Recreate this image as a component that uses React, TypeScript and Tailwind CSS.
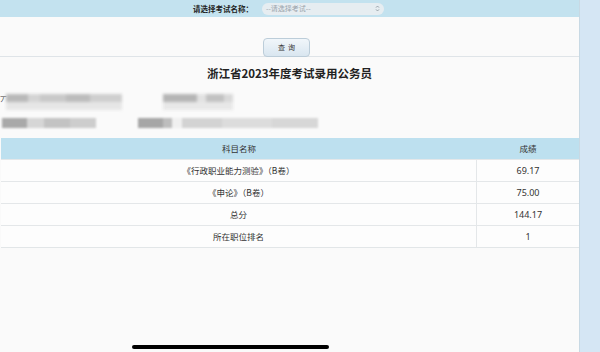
import React from 'react';

const rows = [
  { name: '《行政职业能力测验》（B卷）', score: '69.17' },
  { name: '《申论》（B卷）', score: '75.00' },
  { name: '总分', score: '144.17' },
  { name: '所在职位排名', score: '1' },
];

const font = { fontFamily: '"Noto Sans CJK SC", "Noto Sans", sans-serif' };

const App = () => {
  return (
    <div className="relative flex h-[352px] w-[600px] overflow-hidden bg-[#d5e6f4]" style={font}>
      <div className="flex h-full w-[580px] flex-col border-r border-[#c8d9e4] bg-[#fafafa]">
        {/* Exam picker bar */}
        <div className="flex h-[17px] items-center bg-[#c3e2ef] pl-[193px]">
          <span className="text-[7.5px] font-bold text-[#222]">请选择考试名称：</span>
          <div className="ml-[9px] flex h-[12px] w-[122px] items-center justify-between rounded-full bg-[#e6edf1] pl-[4px] pr-[4px]">
            <span className="text-[7px] text-[#9aa3ab]">--请选择考试--</span>
            <svg width="5" height="7" viewBox="0 0 5 7" className="text-[#8a949c]">
              <path d="M1 2.6 L2.5 1 L4 2.6 M1 4.4 L2.5 6 L4 4.4" fill="none" stroke="currentColor" strokeWidth="0.8" />
            </svg>
          </div>
        </div>

        {/* Query button */}
        <div className="flex border-b border-[#dfe4e8] pl-[263px] pt-[21px]">
          <div className="mb-[-1px] flex h-[19px] w-[47px] items-center justify-center rounded-[4px] border border-[#bccdd9] bg-gradient-to-b from-[#f1f6fa] to-[#d9e6f0] pl-[3px] text-[7px] tracking-[3px] text-[#333]">
            查询
          </div>
        </div>

        {/* Title */}
        <div className="pt-[9px] text-center text-[11.5px] font-semibold leading-[15px] text-[#222]">
          浙江省2023年度考试录用公务员
        </div>

        {/* Blurred personal info */}
        <div className="mt-[13px] flex h-[16px] items-start">
          <span className="w-[6px] text-[7px] leading-[10px] text-[#333]">丆</span>
          <div className="flex h-[16px] w-[116px] flex-col blur-[1.5px]">
            <div className="flex h-[8px]">
              <div className="w-[22px] bg-[#b9b9b9]" />
              <div className="w-[12px] bg-[#d4d4d4]" />
              <div className="w-[26px] bg-[#c9c9c9]" />
              <div className="w-[24px] bg-[#bcbcbc]" />
              <div className="w-[32px] bg-[#cfcfcf]" />
            </div>
            <div className="h-[8px] bg-[#e6e6e6]" />
          </div>
          <div className="ml-[41px] flex h-[16px] w-[70px] flex-col blur-[1.5px]">
            <div className="flex h-[8px]">
              <div className="w-[34px] bg-[#b5b5b5]" />
              <div className="w-[9px] bg-[#e2e2e2]" />
              <div className="w-[18px] bg-[#c2c2c2]" />
              <div className="w-[9px] bg-[#d9d9d9]" />
            </div>
            <div className="h-[8px] bg-[#e8e8e8]" />
          </div>
        </div>

        <div className="mt-[8px] flex h-[10px] items-start pl-[2px]">
          <div className="flex h-[10px] w-[94px] blur-[1.2px]">
            <div className="w-[25px] bg-[#a9a9a9]" />
            <div className="w-[17px] bg-[#d6d6d6]" />
            <div className="w-[26px] bg-[#c3c3c3]" />
            <div className="w-[26px] bg-[#cdcdcd]" />
          </div>
          <div className="ml-[42px] flex h-[10px] w-[180px] blur-[1.2px]">
            <div className="w-[25px] bg-[#a6a6a6]" />
            <div className="w-[9px] bg-[#bdbdbd]" />
            <div className="w-[10px] bg-[#f0f0f0]" />
            <div className="w-[40px] bg-[#d3d3d3]" />
            <div className="w-[50px] bg-[#dcdcdc]" />
            <div className="w-[46px] bg-[#d7d7d7]" />
          </div>
        </div>

        {/* Score table */}
        <div className="ml-[1px] mt-[10px] w-[578px] border-b border-[#e2e6e8] text-[8.5px] text-[#333]">
          <div className="flex h-[21px] items-center bg-[#bde0ef]">
            <div className="w-[476px] text-center">科目名称</div>
            <div className="flex-1 text-center">成绩</div>
          </div>
          {rows.map((r, i) => (
            <div key={i} className="flex h-[22px] items-center border-t border-[#e4e7e9] bg-[#fdfdfd]">
              <div className="flex h-full w-[476px] items-center justify-center border-r border-[#e4e7e9]">{r.name}</div>
              <div className="flex-1 text-center text-[9px]" style={{ fontFamily: '"Noto Sans", sans-serif' }}>{r.score}</div>
            </div>
          ))}
        </div>
      </div>

      {/* Home indicator */}
      <div className="absolute left-[132px] top-[345px] h-[4px] w-[197px] rounded-full bg-black" />
    </div>
  );
};

export default App;
